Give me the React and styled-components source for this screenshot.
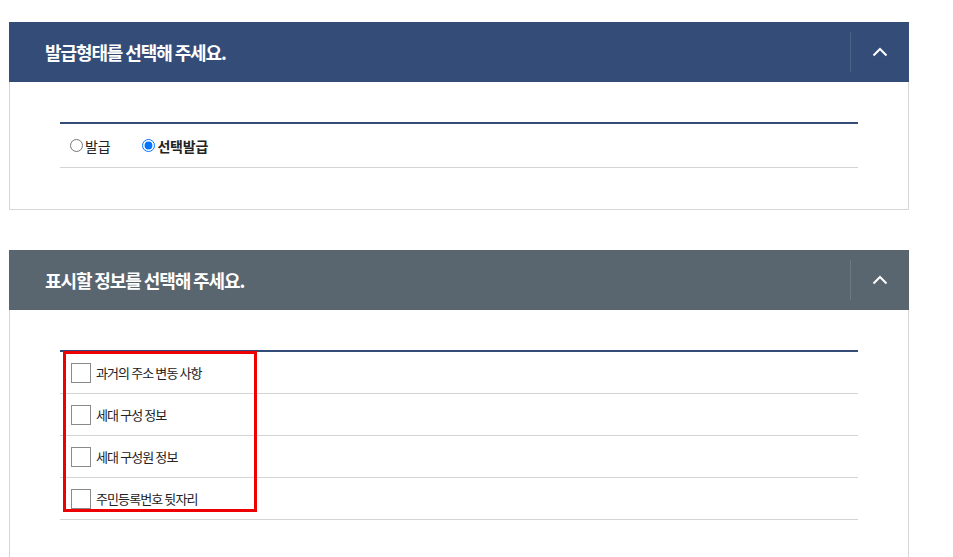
import React, { useState } from "react";
import styled, { createGlobalStyle } from "styled-components";

// ====== Colors ======
const colors = {
  navy: "#344d78",
  slate: "#59666f",
  border: "#d6d6d6",
  rowLine: "#d4d4d4",
  text: "#222",
  annotate: "#ee0000"
};

const GlobalStyle = createGlobalStyle`
  html, body { margin: 0; padding: 0; background: #fff; }
  body {
    font-family: "Noto Sans CJK KR", "Noto Sans", "Liberation Sans", sans-serif;
    color: ${colors.text};
  }
`;

// ====== Styled Components ======
const Page = styled.div`
  display: flex;
  flex-direction: column;
  gap: 40px;
  padding: 22px 44px 0 9px;
  width: 900px;
`;

const Panel = styled.section`
  display: flex;
  flex-direction: column;
`;

const PanelHeader = styled.div`
  height: 60px;
  display: flex;
  align-items: center;
  justify-content: space-between;
  background: ${props => props.tone};
  color: #fff;
`;

const PanelTitle = styled.h2`
  margin: 0 0 0 36px;
  font-size: 18px;
  font-weight: 700;
  letter-spacing: -1.1px;
`;

const ToggleButton = styled.button`
  display: flex;
  align-items: center;
  justify-content: center;
  width: 59px;
  height: 40px;
  padding: 0;
  background: transparent;
  border: none;
  border-left: 1px solid rgba(255, 255, 255, 0.12);
  cursor: pointer;
`;

const PanelBody = styled.div`
  border: 1px solid ${colors.border};
  border-top: none;
  padding: 40px 50px ${props => props.bottom}px 50px;
`;

const OptionTable = styled.div`
  position: relative;
  border-top: 2px solid ${colors.navy};
`;

const RadioRow = styled.div`
  display: flex;
  align-items: center;
  gap: 31px;
  height: 43px;
  padding-left: 9px;
  border-bottom: 1px solid ${colors.rowLine};
`;

const RadioLabel = styled.label`
  display: flex;
  align-items: center;
  font-size: 14px;
  letter-spacing: -0.2px;
  font-weight: ${props => (props.checked ? 700 : 400)};
  cursor: pointer;

  input {
    margin: 0 2px 0 1px;
    width: 13px;
    height: 13px;
  }
`;

const CheckRow = styled.label`
  display: flex;
  align-items: center;
  gap: 5px;
  height: 41px;
  padding-left: 11px;
  border-bottom: 1px solid ${colors.rowLine};
  font-size: 13px;
  letter-spacing: -0.9px;
  cursor: pointer;
`;

const CheckBox = styled.span`
  width: 18px;
  height: 18px;
  border: 1px solid #8a8a8a;
  background: ${props => (props.checked ? colors.navy : "#fff")};
`;

const HiddenInput = styled.input`
  display: none;
`;

// red annotation box drawn over the checkbox list
const Highlight = styled.div`
  position: absolute;
  top: -1px;
  left: 3px;
  width: 188px;
  height: 155px;
  border: 3px solid ${colors.annotate};
  pointer-events: none;
`;

const Chevron = () => (
  <svg width="16" height="10" viewBox="0 0 16 10">
    <path d="M1.5 8.5 L8 2 L14.5 8.5" fill="none" stroke="#fff" strokeWidth="2" />
  </svg>
);

// ====== Main Component ======
const App = () => {
  const [issueType, setIssueType] = useState("select");
  const [checked, setChecked] = useState({});

  const infoItems = [
    "과거의 주소 변동 사항",
    "세대 구성 정보",
    "세대 구성원 정보",
    "주민등록번호 뒷자리"
  ];

  return (
    <>
      <GlobalStyle />
      <Page>
        <Panel>
          <PanelHeader tone={colors.navy}>
            <PanelTitle>발급형태를 선택해 주세요.</PanelTitle>
            <ToggleButton aria-label="접기"><Chevron /></ToggleButton>
          </PanelHeader>
          <PanelBody bottom={41}>
            <OptionTable>
              <RadioRow>
                <RadioLabel checked={issueType === "all"}>
                  <input
                    type="radio"
                    name="issue"
                    checked={issueType === "all"}
                    onChange={() => setIssueType("all")}
                  />
                  발급
                </RadioLabel>
                <RadioLabel checked={issueType === "select"}>
                  <input
                    type="radio"
                    name="issue"
                    checked={issueType === "select"}
                    onChange={() => setIssueType("select")}
                  />
                  선택발급
                </RadioLabel>
              </RadioRow>
            </OptionTable>
          </PanelBody>
        </Panel>

        <Panel>
          <PanelHeader tone={colors.slate}>
            <PanelTitle>표시할 정보를 선택해 주세요.</PanelTitle>
            <ToggleButton aria-label="접기"><Chevron /></ToggleButton>
          </PanelHeader>
          <PanelBody bottom={40}>
            <OptionTable>
              {infoItems.map(item => (
                <CheckRow key={item}>
                  <HiddenInput
                    type="checkbox"
                    checked={!!checked[item]}
                    onChange={() => setChecked(prev => ({ ...prev, [item]: !prev[item] }))}
                  />
                  <CheckBox checked={!!checked[item]} />
                  {item}
                </CheckRow>
              ))}
              <Highlight />
            </OptionTable>
          </PanelBody>
        </Panel>
      </Page>
    </>
  );
};

export default App;
